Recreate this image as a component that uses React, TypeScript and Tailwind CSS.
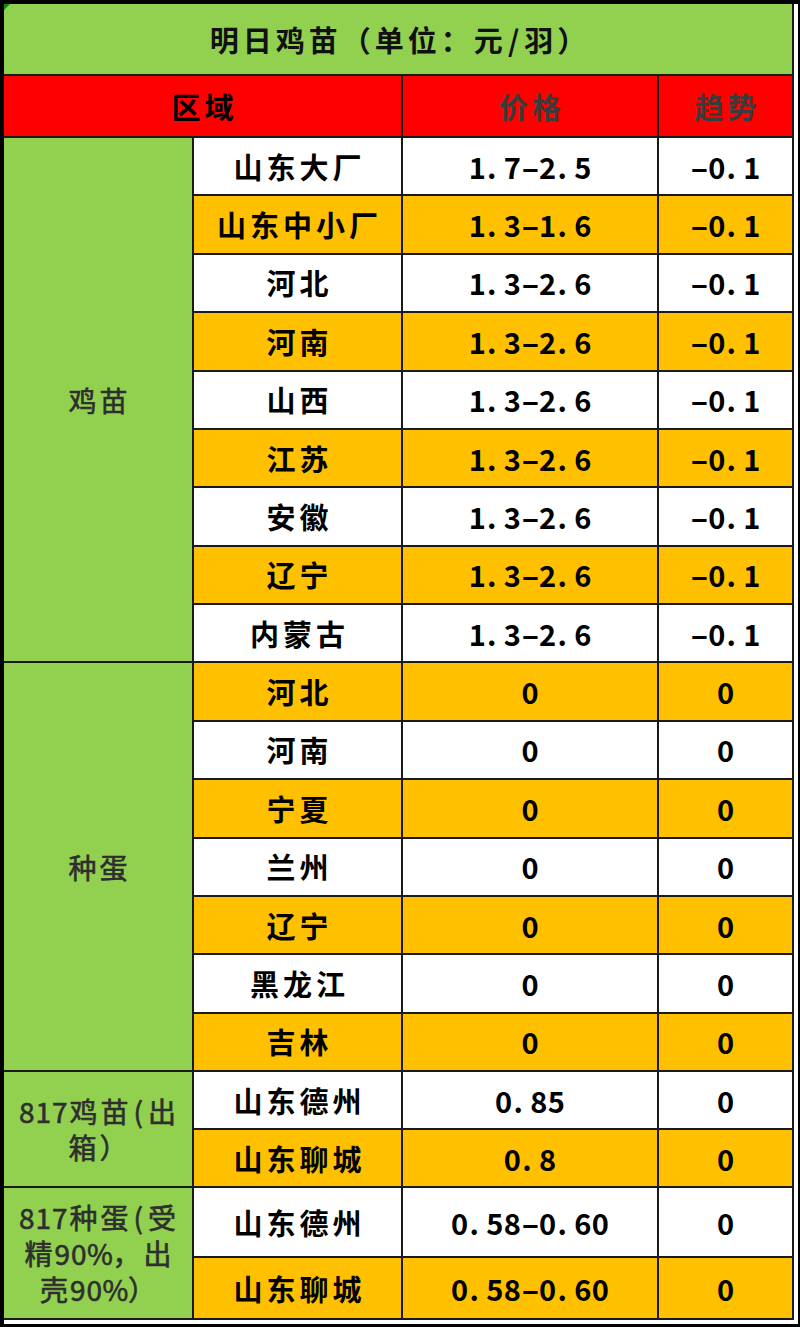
import React from "react";

type Row = [string, string, string];

const chickRows: Row[] = [
  ["山东大厂", "1.7-2.5", "-0.1"],
  ["山东中小厂", "1.3-1.6", "-0.1"],
  ["河北", "1.3-2.6", "-0.1"],
  ["河南", "1.3-2.6", "-0.1"],
  ["山西", "1.3-2.6", "-0.1"],
  ["江苏", "1.3-2.6", "-0.1"],
  ["安徽", "1.3-2.6", "-0.1"],
  ["辽宁", "1.3-2.6", "-0.1"],
  ["内蒙古", "1.3-2.6", "-0.1"],
];

const eggRows: Row[] = [
  ["河北", "0", "0"],
  ["河南", "0", "0"],
  ["宁夏", "0", "0"],
  ["兰州", "0", "0"],
  ["辽宁", "0", "0"],
  ["黑龙江", "0", "0"],
  ["吉林", "0", "0"],
];

const groups = [
  { label: ["鸡苗"], span: "row-span-9", rows: chickRows },
  { label: ["种蛋"], span: "row-span-7", rows: eggRows },
  {
    label: ["817鸡苗(出", "箱）"],
    span: "row-span-2",
    rows: [
      ["山东德州", "0.85", "0"],
      ["山东聊城", "0.8", "0"],
    ] as Row[],
  },
  {
    label: ["817种蛋(受", "精90%，出", "壳90%）"],
    span: "row-span-2",
    rows: [
      ["山东德州", "0.58-0.60", "0"],
      ["山东聊城", "0.58-0.60", "0"],
    ] as Row[],
  },
];

// lays characters out in fixed cells, full width for CJK and half width for ascii
function Glyphs({ text, wide, narrow }: { text: string; wide: string; narrow: string }) {
  return (
    <span className="whitespace-nowrap">
      {text.split("").map((c, i) => {
        if (c === "-") {
          return (
            <span key={i} className={`${narrow} inline-block text-center`}>
              <span className="inline-block scale-x-[1.8]">-</span>
            </span>
          );
        }
        if (c === ".") {
          return (
            <span key={i} className={`${narrow} inline-block text-left pl-[1px]`}>
              .
            </span>
          );
        }
        if (c === "%") {
          return (
            <span key={i} className="w-[24px] inline-block text-center">
              %
            </span>
          );
        }
        const ascii = c.charCodeAt(0) < 128;
        return (
          <span key={i} className={`${ascii ? narrow : wide} inline-block text-center`}>
            {c}
          </span>
        );
      })}
    </span>
  );
}

const font = "font-['Noto_Sans_CJK_SC','Noto_Sans',sans-serif]";
const cell = "flex items-center justify-center leading-none";

export default function App() {
  let idx = 0;
  return (
    <div className={`w-[800px] h-[1327px] bg-white border-black border-t-4 border-l-4 border-r-2 border-b-[3px] ${font}`}>
      <div className="grid w-[790px] bg-[#1a1a1a] gap-[2px] pr-[2px] pb-[2px] grid-cols-[188px_207px_254px_133px] grid-rows-[70px_60px_repeat(16,56.375px)_56px_56px_68px_60px]">
        <div className={`${cell} relative col-span-4 bg-[#92d050] text-[29px] font-bold text-[#111]`}>
          <span className="absolute left-0 top-0 w-0 h-0 border-t-[6px] border-r-[6px] border-t-[#0a8a0a] border-r-transparent" />
          <Glyphs text="明日鸡苗（单位：元/羽）" wide="w-[33px]" narrow="w-[17.6px]" />
        </div>

        <div className={`${cell} col-span-2 bg-[#ff0000] text-[29px] font-bold text-black`}>
          <Glyphs text="区域" wide="w-[33px]" narrow="w-[17.6px]" />
        </div>
        <div className={`${cell} bg-[#ff0000] text-[29px] font-bold text-[#3b3b3b]`}>
          <Glyphs text="价格" wide="w-[33px]" narrow="w-[17.6px]" />
        </div>
        <div className={`${cell} bg-[#ff0000] text-[29px] font-bold text-[#3b3b3b]`}>
          <Glyphs text="趋势" wide="w-[33px]" narrow="w-[17.6px]" />
        </div>

        {groups.map((g, gi) => (
          <React.Fragment key={gi}>
            <div className={`col-start-1 ${g.span} flex flex-col items-center justify-center bg-[#92d050] text-[28px] font-normal text-[#2e2e2e] [-webkit-text-stroke:0.6px_#2e2e2e]`}>
              {g.label.map((line, li) => (
                <div key={li} className="leading-[36px]">
                  <Glyphs text={line} wide="w-[31px]" narrow="w-[16.5px]" />
                </div>
              ))}
            </div>
            {g.rows.map((r) => {
              const bg = idx++ % 2 === 0 ? "bg-white" : "bg-[#ffc000]";
              return (
                <React.Fragment key={idx}>
                  <div className={`${cell} col-start-2 ${bg} text-[29px] font-bold text-black`}>
                    <Glyphs text={r[0]} wide="w-[33px]" narrow="w-[17.6px]" />
                  </div>
                  <div className={`${cell} col-start-3 ${bg} text-[29px] font-bold text-black`}>
                    <Glyphs text={r[1]} wide="w-[33px]" narrow="w-[17.6px]" />
                  </div>
                  <div className={`${cell} col-start-4 ${bg} text-[29px] font-bold text-black`}>
                    <Glyphs text={r[2]} wide="w-[33px]" narrow="w-[17.6px]" />
                  </div>
                </React.Fragment>
              );
            })}
          </React.Fragment>
        ))}
      </div>
    </div>
  );
}
